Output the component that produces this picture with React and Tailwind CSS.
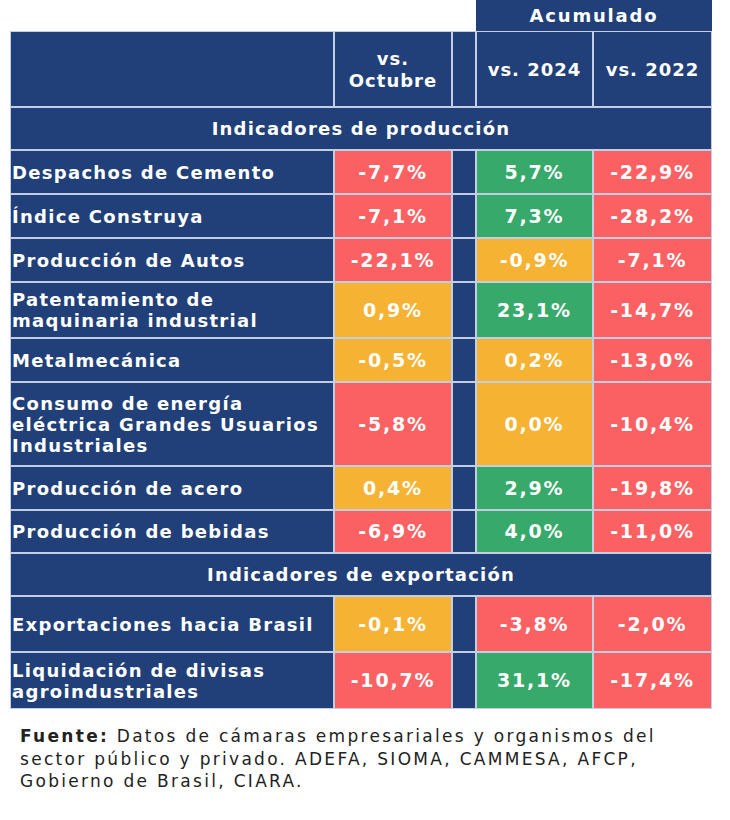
import React from "react";

const RED = "bg-[#fb6163]";
const GREEN = "bg-[#37a96a]";
const YELLOW = "bg-[#f5b233]";

const sections = [
  {
    title: "Indicadores de producción",
    rows: [
      { label: ["Despachos de Cemento"], h: "h-[42px]", vals: [["-7,7%", RED], ["5,7%", GREEN], ["-22,9%", RED]] },
      { label: ["Índice Construya"], h: "h-[42px]", vals: [["-7,1%", RED], ["7,3%", GREEN], ["-28,2%", RED]] },
      { label: ["Producción de Autos"], h: "h-[42px]", vals: [["-22,1%", RED], ["-0,9%", YELLOW], ["-7,1%", RED]] },
      { label: ["Patentamiento de", "maquinaria industrial"], h: "h-[54px]", vals: [["0,9%", YELLOW], ["23,1%", GREEN], ["-14,7%", RED]] },
      { label: ["Metalmecánica"], h: "h-[42px]", vals: [["-0,5%", YELLOW], ["0,2%", YELLOW], ["-13,0%", RED]] },
      { label: ["Consumo de energía", "eléctrica Grandes Usuarios", "Industriales"], h: "h-[82px]", vals: [["-5,8%", RED], ["0,0%", YELLOW], ["-10,4%", RED]] },
      { label: ["Producción de acero"], h: "h-[42px]", vals: [["0,4%", YELLOW], ["2,9%", GREEN], ["-19,8%", RED]] },
      { label: ["Producción de bebidas"], h: "h-[41px]", vals: [["-6,9%", RED], ["4,0%", GREEN], ["-11,0%", RED]] },
    ],
  },
  {
    title: "Indicadores de exportación",
    rows: [
      { label: ["Exportaciones hacia Brasil"], h: "h-[54px]", vals: [["-0,1%", YELLOW], ["-3,8%", RED], ["-2,0%", RED]] },
      { label: ["Liquidación de divisas", "agroindustriales"], h: "h-[55px]", vals: [["-10,7%", RED], ["31,1%", GREEN], ["-17,4%", RED]] },
    ],
  },
];

const Value = ({ v, color, h }) => (
  <div className={`${color} ${h} flex items-center justify-center text-white font-bold text-[19px] tracking-[1.8px]`}>
    {v}
  </div>
);

export default function App() {
  return (
    <div className="w-[730px] h-[820px] bg-white font-['DejaVu_Sans',sans-serif]">
      <div className="pl-[10px] pt-0">
        <div className="flex">
          <div className="w-[466px]" />
          <div className="w-[236px] h-[31px] bg-[#213f78] flex items-center justify-center text-white font-bold text-[18px] tracking-[1.8px]">
            Acumulado
          </div>
        </div>

        <div className="w-[702px] grid grid-cols-[322px_116px_22px_115px_117px] gap-[2px] p-[1px] bg-[#c3cee2]">
          {/* header */}
          <div className="bg-[#213f78] h-[74px]" />
          <div className="bg-[#213f78] h-[74px] flex flex-col items-center justify-center text-white font-bold text-[18px] tracking-[1px] leading-[22px] pt-[2px]">
            <span>vs.</span>
            <span>Octubre</span>
          </div>
          <div className="bg-[#213f78] h-[74px]" />
          <div className="bg-[#213f78] h-[74px] flex items-center justify-center text-white font-bold text-[18px] tracking-[1px]">
            vs. 2024
          </div>
          <div className="bg-[#213f78] h-[74px] flex items-center justify-center text-white font-bold text-[18px] tracking-[1px]">
            vs. 2022
          </div>

          {sections.map((s) => (
            <React.Fragment key={s.title}>
              <div className="col-span-5 bg-[#213f78] h-[41px] flex items-center justify-center text-white font-bold text-[18px] tracking-[1.2px]">
                {s.title}
              </div>
              {s.rows.map((r) => (
                <React.Fragment key={r.label.join(" ")}>
                  <div className={`${r.h} bg-[#213f78] flex flex-col justify-center pl-[1px] text-white font-bold text-[18px] tracking-[1.3px] leading-[21px]`}>
                    {r.label.map((l) => (
                      <span key={l}>{l}</span>
                    ))}
                  </div>
                  <Value v={r.vals[0][0]} color={r.vals[0][1]} h={r.h} />
                  <div className={`${r.h} bg-[#213f78]`} />
                  <Value v={r.vals[1][0]} color={r.vals[1][1]} h={r.h} />
                  <Value v={r.vals[2][0]} color={r.vals[2][1]} h={r.h} />
                </React.Fragment>
              ))}
            </React.Fragment>
          ))}
        </div>

        <p className="mt-[16px] pl-[10px] text-[17px] tracking-[2.3px] leading-[22.5px] text-[#222]">
          <b>Fuente:</b> Datos de cámaras empresariales y organismos del
          <br />
          sector público y privado. ADEFA, SIOMA, CAMMESA, AFCP,
          <br />
          Gobierno de Brasil, CIARA.
        </p>
      </div>
    </div>
  );
}
